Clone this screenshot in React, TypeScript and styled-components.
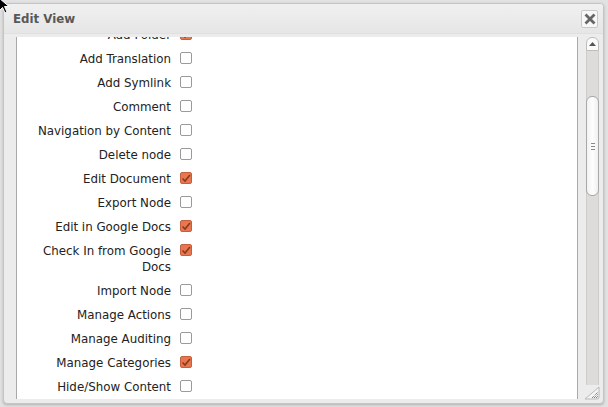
import React from "react";
import styled, { createGlobalStyle } from "styled-components";

const Global = createGlobalStyle`
  html, body { margin: 0; padding: 0; background: #e2e2e2; }
  body { font-family: "DejaVu Sans", Verdana, sans-serif; }
`;

const Page = styled.div`
  position: relative;
  width: 608px;
  height: 407px;
  box-sizing: border-box;
  padding: 3px 4px 3px 3px;
  overflow: hidden;
  background: #e2e2e2;
`;

const Dialog = styled.div`
  height: 100%;
  box-sizing: border-box;
  display: flex;
  flex-direction: column;
  background: #ececec;
  border: 1px solid #c4c4c4;
  border-radius: 4px;
  box-shadow: 0 1px 3px rgba(0, 0, 0, 0.22);
  overflow: hidden;
`;

const TitleBar = styled.div`
  height: 29px;
  flex: none;
  display: flex;
  align-items: center;
  justify-content: space-between;
  padding: 0 5px 0 9px;
  background: linear-gradient(#f0f0f0, #e6e6e6);
  border-bottom: 1px solid #e0e0e0;
`;

const Title = styled.span`
  font-size: 11.8px;
  font-weight: bold;
  color: #585858;
  margin-top: 1px;
`;

const CloseButton = styled.div`
  width: 15px;
  height: 16px;
  display: flex;
  align-items: center;
  justify-content: center;
  background: #f7f7f7;
  border: 1px solid #c9c9c9;
  border-radius: 2px;
`;

const Body = styled.div`
  flex: 1;
  min-height: 0;
  display: flex;
  gap: 8px;
  padding: 3px 4px 4px 12px;
`;

const Panel = styled.div`
  flex: 1;
  background: #fff;
  border-left: 1px solid #a9a9a9;
  border-right: 1px solid #a9a9a9;
  overflow: hidden;
`;

const List = styled.div`
  margin-top: -14px;
  padding-left: 19px;
`;

const Row = styled.div`
  display: grid;
  grid-template-columns: 135px 12px;
  column-gap: 9px;
  padding: 4px 0;
  line-height: 16px;
  font-size: 11.85px;
  color: #222;
`;

const Label = styled.div`
  text-align: right;
`;

const Box = styled.div<{ $checked: boolean }>`
  width: 12px;
  height: 12px;
  margin-top: 1px;
  box-sizing: border-box;
  border-radius: 2px;
  border: 1px solid ${(p) => (p.$checked ? "#c3603e" : "#9a9a9a")};
  background: ${(p) => (p.$checked ? "#e8774f" : "#fff")};
  display: flex;
  align-items: center;
  justify-content: center;
`;

const ScrollBar = styled.div`
  width: 13px;
  display: flex;
  flex-direction: column;
`;

const ArrowUp = styled.div`
  height: 14px;
  flex: none;
  box-sizing: border-box;
  background: #fafafa;
  border: 1px solid #bdbdbd;
  border-radius: 6px 6px 0 0;
  display: flex;
  align-items: center;
  justify-content: center;
`;

const Track = styled.div`
  flex: 1;
  background: #dedbdb;
  border-left: 1px solid #cfcccc;
  border-right: 1px solid #cfcccc;
  padding-top: 45px;
`;

const Thumb = styled.div`
  height: 100px;
  margin: 0 -1px;
  box-sizing: border-box;
  background: linear-gradient(90deg, #f2f2f2, #fdfdfd 50%, #f0f0f0);
  border: 1px solid #a8a8a8;
  border-radius: 6px;
  display: flex;
  flex-direction: column;
  align-items: center;
  justify-content: center;
  gap: 2px;
`;

const GripLine = styled.div`
  width: 4px;
  height: 1px;
  background: #888;
`;

const Resize = styled.div`
  height: 14px;
  flex: none;
  margin-right: -2px;
  margin-left: -3px;
`;

const Cursor = styled.svg`
  position: absolute;
  left: -2px;
  top: -3px;
`;

type Item = { label: string; checked: boolean };

const items: Item[] = [
  { label: "Add Folder", checked: true },
  { label: "Add Translation", checked: false },
  { label: "Add Symlink", checked: false },
  { label: "Comment", checked: false },
  { label: "Navigation by Content", checked: false },
  { label: "Delete node", checked: false },
  { label: "Edit Document", checked: true },
  { label: "Export Node", checked: false },
  { label: "Edit in Google Docs", checked: true },
  { label: "Check In from Google Docs", checked: true },
  { label: "Import Node", checked: false },
  { label: "Manage Actions", checked: false },
  { label: "Manage Auditing", checked: false },
  { label: "Manage Categories", checked: true },
  { label: "Hide/Show Content", checked: false },
];

function Check() {
  return (
    <svg width="10" height="9" viewBox="0 0 10 9">
      <path d="M1.5 4.5 L4 7 L9 1" fill="none" stroke="#8a3a20" strokeWidth="1.7" />
    </svg>
  );
}

export default function App() {
  return (
    <>
      <Global />
      <Page>
        <Dialog>
          <TitleBar>
            <Title>Edit View</Title>
            <CloseButton>
              <svg width="12" height="12" viewBox="0 0 12 12">
                <path d="M1.5 1.5 L10.5 10.5 M10.5 1.5 L1.5 10.5" stroke="#666" strokeWidth="2.8" />
              </svg>
            </CloseButton>
          </TitleBar>
          <Body>
            <Panel>
              <List>
                {items.map((it) => (
                  <Row key={it.label}>
                    <Label>{it.label}</Label>
                    <Box $checked={it.checked}>{it.checked && <Check />}</Box>
                  </Row>
                ))}
              </List>
            </Panel>
            <ScrollBar>
              <ArrowUp>
                <svg width="7" height="4" viewBox="0 0 7 4">
                  <path d="M0 4 L3.5 0 L7 4 Z" fill="#555" />
                </svg>
              </ArrowUp>
              <Track>
                <Thumb>
                  <GripLine />
                  <GripLine />
                  <GripLine />
                </Thumb>
              </Track>
              <Resize>
                <svg width="18" height="14" viewBox="0 0 18 14">
                  <path d="M2 13 L16 1 L16 11 Q16 13 14 13 Z" fill="#f4f4f4" stroke="#b8b8b8" />
                  <path d="M9 12 L15 6 M11 12 L15 8 M13 12 L15 10" stroke="#555" strokeWidth="1" strokeDasharray="1 1" />
                </svg>
              </Resize>
            </ScrollBar>
          </Body>
        </Dialog>
        <Cursor width="14" height="18" viewBox="0 0 14 18">
          <path d="M1 1 L1 14 L4.5 10.5 L7 16 L9 15 L6.5 9.5 L11 9.5 Z" fill="#000" stroke="#fff" strokeWidth="1" />
        </Cursor>
      </Page>
    </>
  );
}
